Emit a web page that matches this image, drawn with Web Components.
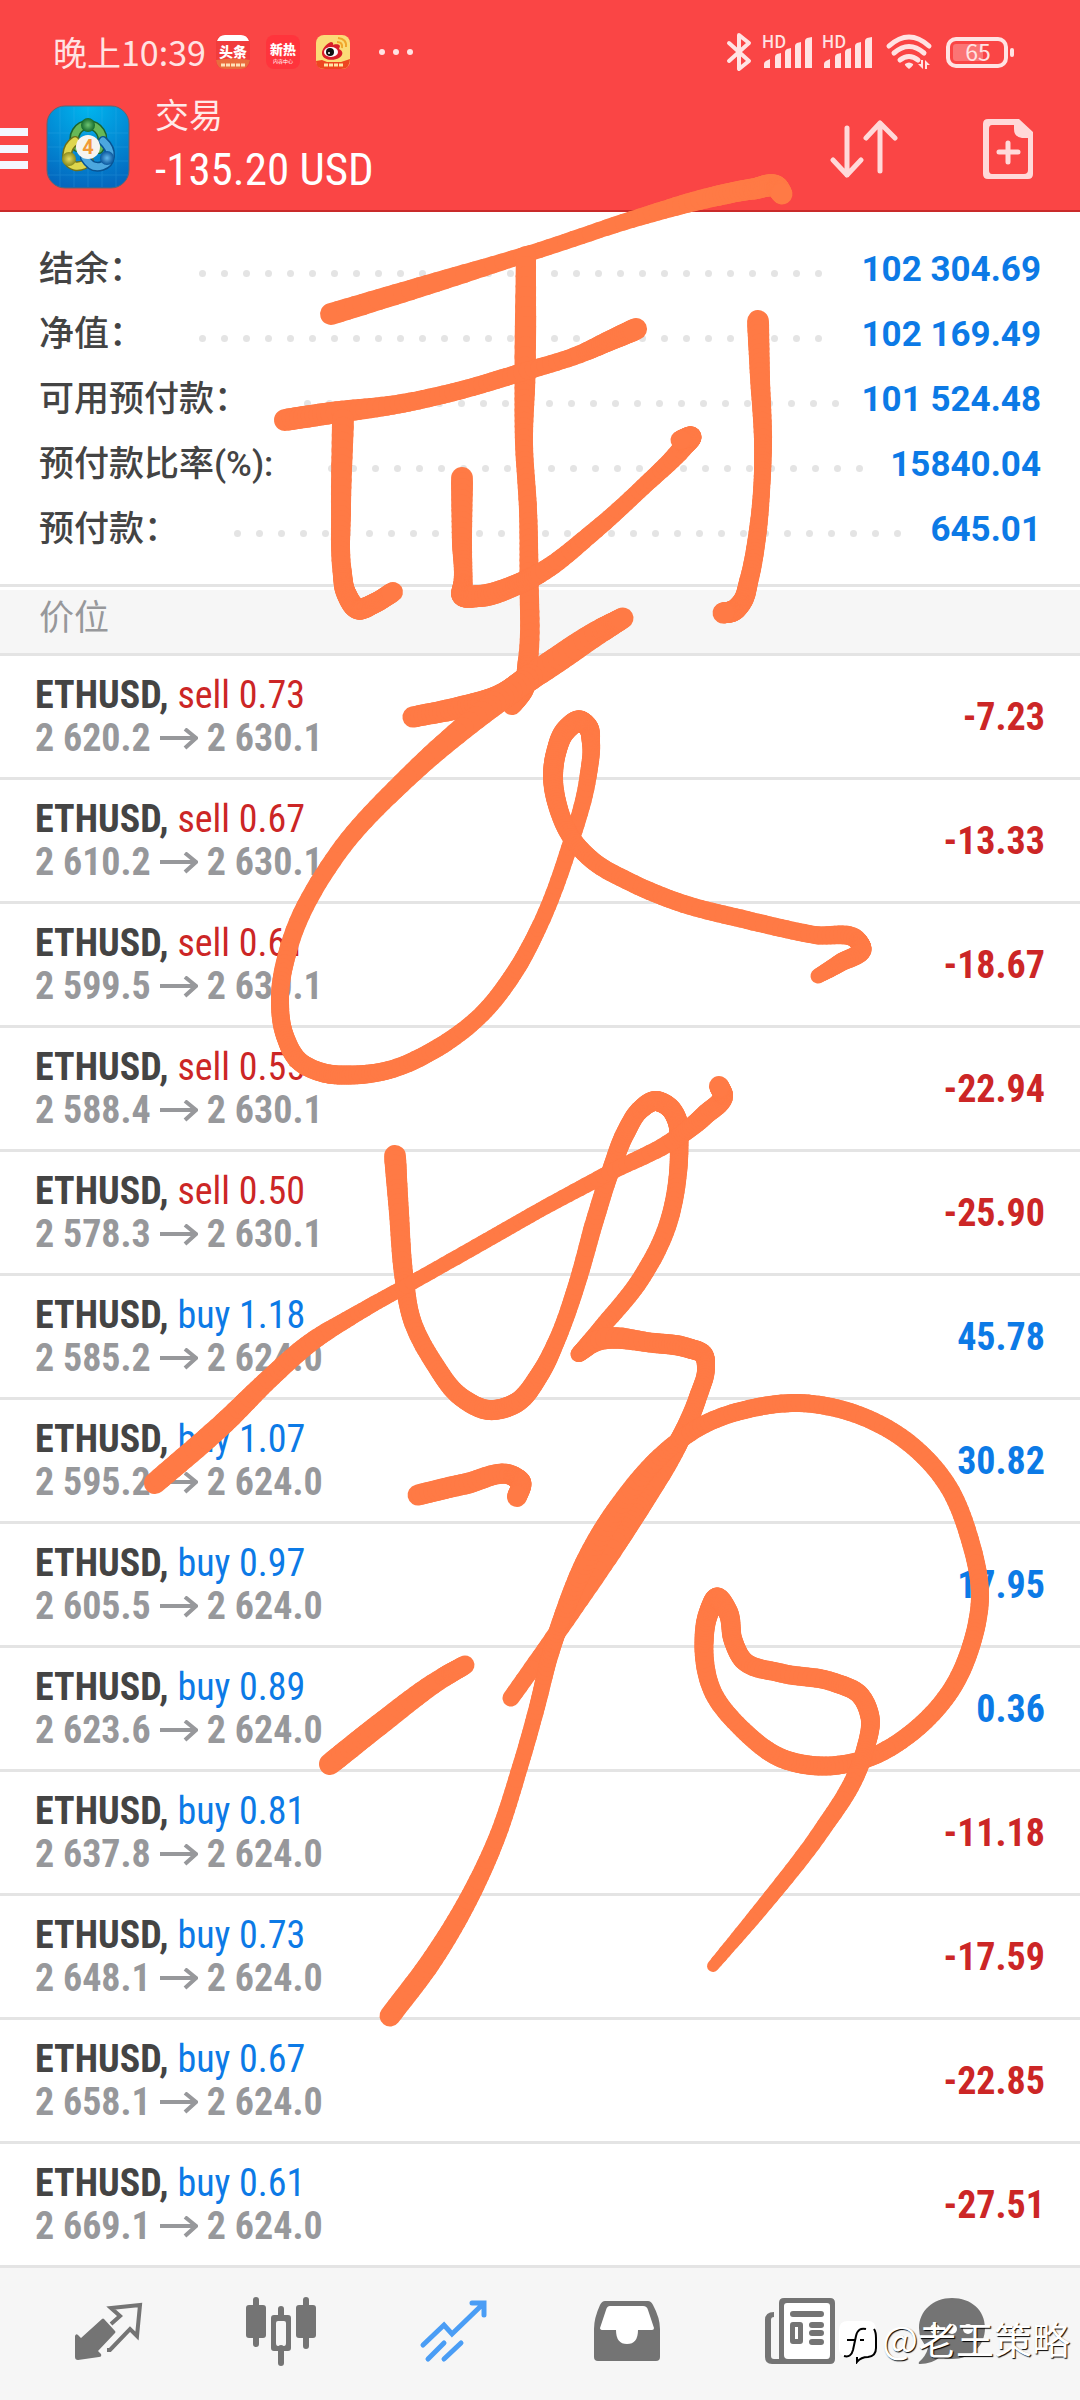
<!DOCTYPE html>
<html lang="zh-CN">
<head>
<meta charset="utf-8">
<meta name="viewport" content="width=device-width, initial-scale=1">
<title>交易</title>
<style>
  body {
    margin: 0;
    background: #fff;
    font-family: Roboto, "Noto Sans CJK SC", sans-serif;
  }
</style>
</head>
<body>
<trade-app></trade-app>

<script>
const CONDENSED = '"Roboto Condensed", "Liberation Sans Narrow", Roboto, sans-serif';

class StatusBar extends HTMLElement {
  connectedCallback() {
    this.attachShadow({ mode: 'open' });
    const bars = `
      <path d="M0 33v-4q0-2 2-3l4-2v9zM11 33V22q0-2 2-3l4-1v15zM21 33V17q0-2 2-3l4-1v20zM31 33V11q0-2 2-3l4-1v26zM41 33V6q0-2 2-3l5-1v31z"/>`;
    this.shadowRoot.innerHTML = `
      <style>
        :host {
          display: flex;
          align-items: center;
          height: 72px;
          padding: 16px 66px 0 53px;
          color: #ffe3e3;
          font: 34px/44px "Noto Sans CJK SC", sans-serif;
        }
        svg { display: block; flex: none; fill: currentColor; overflow: visible; }
        .apps { display: flex; align-items: center; gap: 16px; margin-left: 10px; }
        .more { margin-left: 28px; }
        .system { display: flex; align-items: center; gap: 10px; margin-left: auto; }
        .wifi, .battery { margin-left: 4px; }
        text { font-family: "Noto Sans CJK SC", sans-serif; text-anchor: middle; }
      </style>
      <time>晚上10:39</time>
      <div class="apps">
        <svg width="34" height="34" viewBox="0 0 34 34" role="img" aria-label="头条">
          <rect width="34" height="34" rx="8" fill="#f13c3c"/>
          <path d="M1 6Q3 0 9 0h16q6 0 8 6z" fill="#fff"/>
          <text x="17" y="22" font-size="14" font-weight="900" fill="#fff">头条</text>
          <path d="M0 25q17-3 34 0-2 9-9 9H9q-8 0-9-9z" fill="#e96d3e"/>
          <path d="M5 30h24" stroke="#ffe1b8" stroke-width="3" stroke-dasharray="4 1"/>
        </svg>
        <svg width="34" height="34" viewBox="0 0 34 34" role="img" aria-label="新热">
          <rect width="34" height="34" rx="8" fill="#ff343c"/>
          <text x="17" y="19" font-size="13" font-weight="900" fill="#fff">新热</text>
          <text x="17" y="28" font-size="5" fill="#fff">内容中心</text>
        </svg>
        <svg width="34" height="34" viewBox="0 0 34 34" role="img" aria-label="微博">
          <rect width="34" height="34" rx="8" fill="#fbdc78"/>
          <path d="M6 17c1-5 6-9 9-10 3 0 2 3 2 3s5-2 7 1l-1 3c5 2 4 7 0 9-5 3-18 3-17-6z" fill="#d91e2a"/>
          <ellipse cx="15" cy="17" rx="7" ry="5" fill="#fff"/>
          <circle cx="14" cy="17" r="4" fill="#111"/>
          <circle cx="13" cy="18" r="1" fill="#fff"/>
          <path d="M21 7q6 0 5 6M22 3q9 1 8 9" fill="none" stroke="#f0a52c" stroke-width="2"/>
          <path d="M0 26l6-1 5 2h14l9-3q0 10-9 10H9q-9 0-9-8z" fill="#ee4521"/>
          <path d="M8 30h19" stroke="#ffe6a5" stroke-width="3" stroke-dasharray="4 1"/>
        </svg>
      </div>
      <svg class="more" width="36" height="8" viewBox="0 0 36 8"><circle cx="4" cy="4" r="3"/><circle cx="18" cy="4" r="3"/><circle cx="32" cy="4" r="3"/></svg>
      <div class="system">
        <svg width="26" height="40" viewBox="0 0 26 40" role="img" aria-label="蓝牙">
          <path d="M3 11l20 18-10 8V3l10 8L3 29" fill="none" stroke="currentColor" stroke-width="4" stroke-linejoin="round" stroke-linecap="round"/>
        </svg>
        <svg width="50" height="36" viewBox="0 0 50 36">
          <text x="12" y="14" font-size="17" font-weight="500">HD</text>
          <g transform="translate(2 1)">${bars}</g>
        </svg>
        <svg width="50" height="36" viewBox="0 0 50 36">
          <text x="12" y="14" font-size="17" font-weight="500">HD</text>
          <g transform="translate(2 1)">${bars}</g>
        </svg>
        <svg class="wifi" width="46" height="36" viewBox="0 0 46 36" role="img" aria-label="WLAN">
          <g fill="none" stroke="currentColor" stroke-width="5" stroke-linecap="round">
            <path d="M3 12Q23-6 43 12M8 19q15-13 30 0M14 26q9-7 18 0"/>
          </g>
          <path d="M19 30q4-3 8 0 1 1-4 5-5-4-4-5z"/>
          <path d="M37 26v9l-5-5h3v-4zM39 35v-9l5 5h-3v4z"/>
        </svg>
        <svg class="battery" width="68" height="32" viewBox="0 0 68 32">
          <rect x="2" y="3" width="58" height="27" rx="8" fill="none" stroke="currentColor" stroke-width="4"/>
          <rect x="7" y="8" width="30" height="17" rx="3" opacity=".3"/>
          <rect x="64" y="12" width="4" height="9" rx="2"/>
          <text x="32" y="25" font-size="23">65</text>
        </svg>
      </div>
    `;
  }
}

class AppHeader extends HTMLElement {
  connectedCallback() {
    this.attachShadow({ mode: 'open' });
    this.shadowRoot.innerHTML = `
      <style>
        :host {
          display: block;
          background: #fa4545;
          border-bottom: 2px solid #c92a2a;
          color: #fff;
        }
        .toolbar {
          display: flex;
          align-items: center;
          height: 122px;
          padding-right: 46px;
        }
        button {
          display: block;
          padding: 0;
          border: 0;
          background: none;
          color: #ffd9d9;
        }
        svg { display: block; }
        .logo { margin: 0 25px 4px 18px; }
        .title { flex: 1; padding-bottom: 6px; }
        h1 { margin: 0; font: 34px/48px "Noto Sans CJK SC", sans-serif; color: #ffe9e9; }
        p { margin: 0; font: 45px/64px ${CONDENSED}; }
        .actions { display: flex; align-items: center; gap: 84px; }
      </style>
      <status-bar></status-bar>
      <div class="toolbar">
        <button aria-label="菜单">
          <svg width="28" height="42" viewBox="0 0 28 42" fill="#f4f6ff"><path d="M0 0h28v8H0zM0 17h28v8H0zM0 33h28v8H0z"/></svg>
        </button>
        <svg class="logo" width="84" height="84" viewBox="0 0 84 84" role="img" aria-label="MetaTrader 4">
          <defs>
            <radialGradient id="sky" cx=".5" cy="0" r="1"><stop offset="0" stop-color="#00b6ef"/><stop offset="1" stop-color="#0468bf"/></radialGradient>
            <radialGradient id="g"><stop offset="0" stop-color="#6cc472"/><stop offset="1" stop-color="#14692c"/></radialGradient>
            <radialGradient id="y"><stop offset="0" stop-color="#e5dc62"/><stop offset="1" stop-color="#8a8a1d"/></radialGradient>
            <radialGradient id="b"><stop offset="0" stop-color="#62b7ec"/><stop offset="1" stop-color="#0a569d"/></radialGradient>
          </defs>
          <rect x="1" y="1" width="82" height="82" rx="18" fill="url(#sky)" stroke="#62656f"/>
          <path d="M14 2v80M28 2v80M42 2v80M56 2v80M70 2v80M2 28h80M2 42h80M2 56h80M2 70h80" stroke="#52bdf2" opacity=".2"/>
          <g fill="none" stroke-linecap="round">
            <path d="M31 42c-7-12 2-22 11-22s20 10 11 24" stroke="#1b642e" stroke-width="10"/>
            <path d="M31 42c-7-12 2-22 11-22s20 10 11 24" stroke="#67b857" stroke-width="7"/>
            <path d="M29 36c-9 6-12 22 0 25q8 1 14-5" stroke="#6e711b" stroke-width="10"/>
            <path d="M29 36c-9 6-12 22 0 25q8 1 14-5" stroke="#ded64d" stroke-width="7"/>
            <path d="M57 36c11 10 8 22-1 25s-14-3-17-8" stroke="#085393" stroke-width="10"/>
            <path d="M57 36c11 10 8 22-1 25s-14-3-17-8" stroke="#4ca7df" stroke-width="7"/>
          </g>
          <circle cx="42" cy="20" r="7" fill="url(#g)"/>
          <circle cx="23" cy="54" r="7" fill="url(#y)"/>
          <circle cx="61" cy="53" r="7" fill="url(#b)"/>
          <circle cx="42" cy="42" r="12" fill="#f6f4ef"/>
          <text x="42" y="49" text-anchor="middle" font-family="Roboto, sans-serif" font-size="20" font-weight="700" fill="#f19a36">4</text>
        </svg>
        <div class="title">
          <h1>交易</h1>
          <p>-135.20 USD</p>
        </div>
        <div class="actions">
          <button aria-label="排序">
            <svg width="68" height="60" viewBox="0 0 68 60" fill="none" stroke="currentColor" stroke-width="5" stroke-linecap="round" stroke-linejoin="round">
              <path d="M17 9v47M3 41l14 15 14-15M50 52V4M36 19L50 4l15 15"/>
            </svg>
          </button>
          <button aria-label="新订单">
            <svg width="52" height="62" viewBox="0 0 52 62">
              <path d="M6 1h31l14 13v42q0 5-5 5H6q-5 0-5-5V6q0-5 5-5zm4 6q-3 0-3 4v41q0 4 3 4h32q4 0 4-4V20h-6q-8-1-8-9V7z" fill="currentColor" fill-rule="evenodd"/>
              <path d="M26 25v19M17 34h19" stroke="currentColor" stroke-width="5" stroke-linecap="round"/>
            </svg>
          </button>
        </div>
      </div>
    `;
  }
}

class AccountSummary extends HTMLElement {
  connectedCallback() {
    const lines = [
      ['结余：', '102 304.69'],
      ['净值：', '102 169.49'],
      ['可用预付款：', '101 524.48'],
      ['预付款比率(%):', '15840.04'],
      ['预付款：', '645.01']
    ];
    this.attachShadow({ mode: 'open' });
    this.shadowRoot.innerHTML = `
      <style>
        :host {
          display: block;
          padding: 25px 39px 22px;
          border-bottom: 3px solid #e4e4e4;
        }
        dl { margin: 0; }
        .line { display: flex; align-items: center; height: 65px; }
        dt { font: 500 35px/48px Roboto, "Noto Sans CJK SC", sans-serif; color: #444; }
        dd { margin: 0; font: 700 35px/48px Roboto, sans-serif; color: #0c7ae6; }
        /* dots that do not fit wrap to a second line and are hidden */
        .dots {
          flex: 1;
          display: flex;
          flex-wrap: wrap;
          gap: 15px;
          height: 7px;
          margin: 8px 22px 0 55px;
          overflow: hidden;
        }
        .dots i { width: 7px; height: 7px; border-radius: 50%; background: #e4e4e4; }
      </style>
      <dl>
        ${lines.map(([label, value]) => `
          <div class="line">
            <dt>${label}</dt>
            <span class="dots" aria-hidden="true">${'<i></i>'.repeat(60)}</span>
            <dd>${value}</dd>
          </div>`).join('')}
      </dl>
    `;
  }
}

class SectionTitle extends HTMLElement {
  connectedCallback() {
    this.attachShadow({ mode: 'open' });
    this.shadowRoot.innerHTML = `
      <style>
        :host {
          display: block;
          border-top: 3px solid #fff;
          border-bottom: 3px solid #e4e4e4;
          background: #f6f6f6;
        }
        h2 {
          margin: 0;
          padding: 0 39px 13px;
          font: 35px/50px "Noto Sans CJK SC", sans-serif;
          color: #97989b;
        }
      </style>
      <h2><slot></slot></h2>
    `;
  }
}

class PositionRow extends HTMLElement {
  connectedCallback() {
    const get = name => this.getAttribute(name);
    const profit = get('profit');
    this.attachShadow({ mode: 'open' });
    this.shadowRoot.innerHTML = `
      <style>
        :host {
          display: flex;
          align-items: center;
          justify-content: space-between;
          padding: 18px 35px 17px;
          border-bottom: 3px solid #e4e4e4;
          font: 38px/43px ${CONDENSED};
        }
        .symbol { color: #444; font-weight: 700; }
        .sell, .loss { color: #cc2626; }
        .buy, .gain { color: #0c7ae6; }
        .prices {
          display: flex;
          align-items: center;
          gap: 9px;
          color: #97989b;
          font-weight: 700;
        }
        .profit { font-weight: 700; }
        svg { display: block; }
      </style>
      <div>
        <div><span class="symbol">${get('symbol')},</span> <span class="${get('side')}">${get('side')} ${get('volume')}</span></div>
        <div class="prices">
          <span>${get('open')}</span>
          <svg width="38" height="22" viewBox="0 0 38 22" fill="none" stroke="currentColor" stroke-width="4"><path d="M0 10h36M25 1l11 9-11 10"/></svg>
          <span>${get('price')}</span>
        </div>
      </div>
      <div class="profit ${profit.startsWith('-') ? 'loss' : 'gain'}">${profit}</div>
    `;
  }
}

class TabBar extends HTMLElement {
  connectedCallback() {
    this.attachShadow({ mode: 'open' });
    this.shadowRoot.innerHTML = `
      <style>
        :host { display: block; background: #f6f6f6; }
        nav {
          display: grid;
          grid-template-columns: repeat(5, 173fr) 131fr;
          height: 132px;
          padding: 0 62px 0 21px;
        }
        a {
          display: flex;
          justify-content: center;
          padding-top: 28px;
          color: #747474;
        }
        a.active { color: #4a9df5; }
        svg { display: block; width: 72px; height: 70px; fill: currentColor; }
      </style>
      <nav>
        <a href="#quotes" aria-label="行情">
          <svg viewBox="0 0 72 70">
            <path d="M30 23q1-1 2 0l11 12q1 1 0 2L26 55l3 3q1 3-2 3L6 64q-3 0-3-3V40q1-3 3-1l3 3z"/>
            <path d="M35 54h3l20-21 7 7 3-31-29 3 9 8-9 8" fill="none" stroke="currentColor" stroke-width="4"/>
          </svg>
        </a>
        <a href="#chart" aria-label="图表">
          <svg viewBox="0 0 72 70">
            <rect x="1" y="9" width="20" height="33" rx="3"/>
            <rect x="51" y="9" width="20" height="33" rx="3"/>
            <path d="M11 4v44M61 4v46M36 13v8M36 52v15" stroke="currentColor" stroke-width="6" stroke-linecap="round"/>
            <path d="M29 19h14q3 0 3 3v30q0 3-3 3H29q-3 0-3-3V22q0-3 3-3zm4 6q-2 0-2 2v20q0 3 2 3h6q2 0 2-3V27q0-2-2-2z" fill-rule="evenodd"/>
          </svg>
        </a>
        <a class="active" href="#trade" aria-label="交易" aria-current="page">
          <svg viewBox="0 0 72 70">
            <path d="M5 49l21-20 8 9L65 8M54 7h12v12M10 63l16-16M26 63l17-16" fill="none" stroke="currentColor" stroke-width="5" stroke-linecap="round"/>
          </svg>
        </a>
        <a href="#history" aria-label="历史">
          <svg viewBox="0 0 72 70">
            <path d="M14 5h43q3 0 5 4 7 13 7 24v28q0 4-4 4H7q-4 0-4-4V33Q3 22 9 9q2-4 5-4z"/>
            <path d="M19 10h33q4 0 5 4l6 18q0 2-2 2H47q0 14-11 14T25 34H12q-3 0-3-2l6-18q1-4 4-4z" fill="#fff"/>
          </svg>
        </a>
        <a href="#news" aria-label="新闻">
          <svg viewBox="0 0 72 70">
            <path d="M20 2h46q5 0 5 5v56q0 5-5 5H8q-7 0-7-7V24q0-8 9-8v5q-3 0-3 3v36q0 3 3 3h5V7q0-5 5-5z"/>
            <path d="M23 7h40q3 0 3 3v49q0 4-3 4H24q-4 0-4-4V10q0-3 3-3z" fill="#fff"/>
            <path d="M29 18h28M48 29h9M48 37h9M48 46h9" stroke="currentColor" stroke-width="6" stroke-linecap="round"/>
            <path d="M29 26h7q3 0 3 3v16q0 3-3 3h-7q-3 0-3-3V29q0-3 3-3zm2 5v12h3V31z" fill-rule="evenodd"/>
          </svg>
        </a>
        <a href="#messages" aria-label="邮箱">
          <svg viewBox="0 0 72 70">
            <path d="M36 2C17 2 3 15 3 32q0 12 9 20-2 8-9 14-1 2 1 2 12 0 20-7 5 2 12 2c19 0 33-13 33-31S55 2 36 2z"/>
            <g fill="#fff"><circle cx="19" cy="33" r="5"/><circle cx="36" cy="33" r="5"/><circle cx="52" cy="33" r="5"/></g>
          </svg>
        </a>
      </nav>
    `;
  }
}

class AuthorMark extends HTMLElement {
  connectedCallback() {
    this.attachShadow({ mode: 'open' });
    this.shadowRoot.innerHTML = `
      <style>
        :host {
          display: flex;
          align-items: flex-end;
          gap: 5px;
          color: #fff;
          font: 38px/52px "Noto Sans CJK SC", sans-serif;
          text-shadow: 1px 1px 1px #000;
          white-space: nowrap;
        }
        svg { display: block; }
      </style>
      <svg width="38" height="44" viewBox="0 0 38 44">
        <path d="M9 1h20q8 0 8 9v18q0 8-8 9-7 0-11 5v-5H9q-9 0-9-9V10q0-9 9-9z" fill="#fff"/>
        <path d="M35 9q2 3 2 9v10q0 8-8 9-7 0-11 5v-5M8 20h8M21 20h4M27 9q-8-2-10 7l-3 14q-2 8-9 6" fill="none" stroke="#000" stroke-width="2"/>
      </svg>
      <span>@老王策略</span>
    `;
  }
}

// Freehand ink: every stroke is a list of [x, y, pen width]
const STROKES = [
  [[331,314,22],[427,285,20],[540,250,16],[640,217,17],[712,197,20],[753,189,21],[777,187,22],[782,194,21]],
  [[526,256,20],[525,377,21],[524,443,18],[528,510,18],[529,577,19],[528,660,20],[523,690,21],[512,705,20]],
  [[285,420,22],[331,413,22],[399,404,19],[458,391,18],[516,374,18],[585,352,18],[609,341,20],[636,329,22]],
  [[343,420,22],[341,510,20],[342,570,19],[346,593,20],[358,609,21],[375,603,20],[393,592,20]],
  [[462,478,22],[462,543,20],[463,583,19],[462,595,21],[479,596,22],[516,585,21],[540,573,20],[592,533,18],[643,487,17],[685,445,20],[691,437,21],[680,440,19]],
  [[758,321,22],[760,377,20],[763,443,18],[762,483,17],[757,537,18],[749,580,19],[742,602,20],[733,611,21],[723,613,21]],
  [[413,717,21],[458,708,22],[499,697,24],[540,671,26],[602,630,24],[623,618,21]],
  [[530,677,26],[482,713,24],[407,778,20],[338,853,18],[289,947,18],[280,997,18],[284,1033,18],[299,1061,19],[324,1073,19],[351,1075,19],[389,1070,18],[434,1050,18],[482,1014,17],[516,970,17],[540,925,16],[569,848,16],[588,777,17],[591,743,18],[588,727,20],[580,721,21],[566,730,21],[556,753,20],[553,777,20],[558,807,19],[571,837,18],[592,860,18],[630,882,18],[678,902,18],[747,920,18],[815,935,18],[858,941,19],[862,948,19],[840,963,18],[818,976,15]],
  [[395,1156,22],[399,1213,20],[404,1277,19],[412,1320,18],[434,1363,18],[461,1397,19],[489,1410,20],[516,1403,20],[540,1374,19],[557,1340,17],[576,1287,17],[595,1220,18],[612,1167,18],[626,1132,19],[640,1110,19],[655,1101,20],[669,1107,20],[678,1123,20],[679,1140,19],[678,1173,18],[667,1227,18],[640,1280,18],[602,1327,17],[579,1354,16],[592,1343,20],[654,1343,20],[688,1348,20],[704,1355,19],[706,1367,18],[698,1397,18],[686,1427,19],[676,1447,20],[643,1500,23],[616,1543,22],[561,1627,18],[511,1698,17]],
  [[155,1483,22],[224,1423,22],[269,1379,20],[310,1343,19],[358,1313,16],[406,1286,15],[482,1243,15],[540,1210,15],[609,1173,16],[678,1137,18],[705,1115,20],[723,1095,20],[719,1086,20]],
  [[418,1495,21],[465,1484,21],[513,1476,20],[521,1482,20],[517,1497,20]],
  [[330,1764,22],[379,1725,22],[444,1677,20],[465,1665,19]],
  [[390,2016,21],[430,1963,21],[468,1900,19],[496,1840,17],[520,1767,16],[537,1707,16],[550,1655,17],[564,1613,18],[587,1560,21],[622,1503,21],[664,1453,18],[705,1424,18],[753,1408,18],[795,1403,18],[850,1412,18],[905,1440,18],[946,1483,18],[970,1540,18],[980,1597,18],[972,1643,18],[953,1687,18],[915,1730,18],[871,1757,18],[822,1766,19],[781,1758,19],[743,1730,18],[712,1690,18],[704,1643,19],[709,1612,20],[717,1598,21],[728,1612,20],[733,1640,19],[743,1660,19],[781,1673,19],[833,1682,19],[860,1695,19],[870,1717,19],[865,1750,18],[855,1777,18],[822,1830,17],[760,1910,15],[713,1966,12]]
];

class InkLayer extends HTMLElement {
  connectedCallback() {
    this.attachShadow({ mode: 'open' });
    this.shadowRoot.innerHTML = `
      <style>
        :host { display: block; pointer-events: none; }
        svg { display: block; width: 100%; height: auto; }
      </style>
      <svg viewBox="0 0 1080 2400" stroke="#ff7a45" stroke-linecap="round" aria-hidden="true">
        ${STROKES.map(points => this.renderStroke(points)).join('')}
      </svg>
    `;
  }

  // Smooth curve through the points, cut into short lines so the pen width can change
  renderStroke(points) {
    const steps = 12;
    const dist = (p, q) => Math.hypot(q[0] - p[0], q[1] - p[1]);
    // unit-speed tangent at each point
    const tangents = points.map((p, i) => {
      const before = points[i - 1] || p;
      const after = points[i + 1] || p;
      const d1 = dist(before, p);
      const d2 = dist(p, after);
      return [0, 1, 2].map(k => {
        if (!d1) return (after[k] - p[k]) / d2;
        if (!d2) return (p[k] - before[k]) / d1;
        return ((p[k] - before[k]) / d1 * d2 + (after[k] - p[k]) / d2 * d1) / (d1 + d2);
      });
    });
    let last = points[0];
    let out = '';
    for (let i = 0; i < points.length - 1; i++) {
      const b = points[i];
      const c = points[i + 1];
      const len = dist(b, c);
      for (let s = 1; s <= steps; s++) {
        const t = s / steps;
        const t2 = t * t;
        const t3 = t2 * t;
        const next = [0, 1, 2].map(k =>
          (2 * t3 - 3 * t2 + 1) * b[k] + (t3 - 2 * t2 + t) * len * tangents[i][k]
          + (3 * t2 - 2 * t3) * c[k] + (t3 - t2) * len * tangents[i + 1][k]);
        out += `<line x1="${last[0].toFixed(1)}" y1="${last[1].toFixed(1)}" x2="${next[0].toFixed(1)}" y2="${next[1].toFixed(1)}" stroke-width="${next[2].toFixed(1)}"/>`;
        last = next;
      }
    }
    return out;
  }
}

class TradeApp extends HTMLElement {
  connectedCallback() {
    const positions = [
      ['sell', '0.73', '2 620.2', '2 630.1', '-7.23'],
      ['sell', '0.67', '2 610.2', '2 630.1', '-13.33'],
      ['sell', '0.61', '2 599.5', '2 630.1', '-18.67'],
      ['sell', '0.55', '2 588.4', '2 630.1', '-22.94'],
      ['sell', '0.50', '2 578.3', '2 630.1', '-25.90'],
      ['buy', '1.18', '2 585.2', '2 624.0', '45.78'],
      ['buy', '1.07', '2 595.2', '2 624.0', '30.82'],
      ['buy', '0.97', '2 605.5', '2 624.0', '17.95'],
      ['buy', '0.89', '2 623.6', '2 624.0', '0.36'],
      ['buy', '0.81', '2 637.8', '2 624.0', '-11.18'],
      ['buy', '0.73', '2 648.1', '2 624.0', '-17.59'],
      ['buy', '0.67', '2 658.1', '2 624.0', '-22.85'],
      ['buy', '0.61', '2 669.1', '2 624.0', '-27.51']
    ];
    this.attachShadow({ mode: 'open' });
    this.shadowRoot.innerHTML = `
      <style>
        :host { display: block; position: relative; overflow: hidden; }
        ink-layer { position: absolute; top: 0; left: 0; width: 100%; }
        author-mark { position: absolute; right: 10px; bottom: 36px; }
      </style>
      <app-header></app-header>
      <main>
        <account-summary></account-summary>
        <section-title>价位</section-title>
        <div role="list">
          ${positions.map(([side, volume, open, price, profit]) => `
            <position-row role="listitem" symbol="ETHUSD" side="${side}" volume="${volume}" open="${open}" price="${price}" profit="${profit}"></position-row>`).join('')}
        </div>
      </main>
      <tab-bar></tab-bar>
      <ink-layer></ink-layer>
      <author-mark></author-mark>
    `;
  }
}

customElements.define('status-bar', StatusBar);
customElements.define('app-header', AppHeader);
customElements.define('account-summary', AccountSummary);
customElements.define('section-title', SectionTitle);
customElements.define('position-row', PositionRow);
customElements.define('tab-bar', TabBar);
customElements.define('author-mark', AuthorMark);
customElements.define('ink-layer', InkLayer);
customElements.define('trade-app', TradeApp);
</script>
</body>
</html>
